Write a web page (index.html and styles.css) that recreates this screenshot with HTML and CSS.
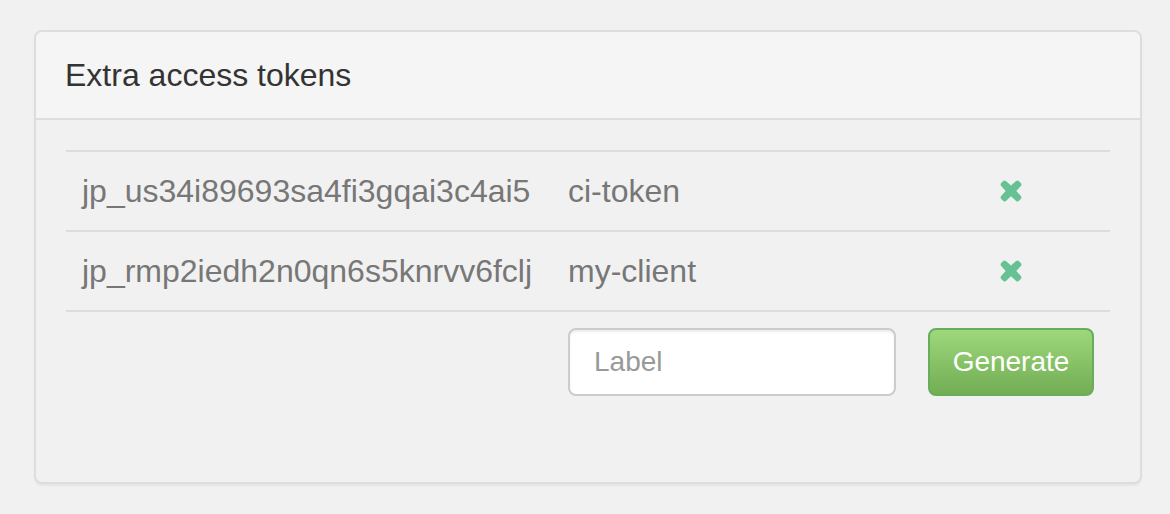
FILE: index.html
```html
<!DOCTYPE html>
<html lang="en">
<head>
<meta charset="utf-8">
<title>Extra access tokens</title>
<link rel="stylesheet" href="styles.css">
</head>
<body>
<form class="panel">
  <h1 class="panel-heading">Extra access tokens</h1>
  <div class="panel-body">
    <table class="tokens">
      <colgroup><col class="col-token"><col class="col-label"><col class="col-action"></colgroup>
      <tbody>
        <tr>
          <td>jp_us34i89693sa4fi3gqai3c4ai5</td>
          <td>ci-token</td>
          <td class="action"><button class="remove" type="button" aria-label="Remove ci-token"><svg class="icon" viewBox="0 0 22 22" aria-hidden="true"><path d="M5.9 1.1 L11 5.6 L16.1 1.1 Q17.6 0 19 1.2 L20.8 3 Q22 4.4 20.9 5.9 L16.3 11 L20.9 16.1 Q22 17.6 20.8 19 L19 20.8 Q17.6 22 16.1 20.9 L11 16.3 L5.9 20.9 Q4.4 22 3 20.8 L1.2 19 Q0 17.6 1.1 16.1 L5.7 11 L1.1 5.9 Q0 4.4 1.2 3 L3 1.2 Q4.4 0 5.9 1.1 Z"/></svg></button></td>
        </tr>
        <tr>
          <td>jp_rmp2iedh2n0qn6s5knrvv6fclj</td>
          <td>my-client</td>
          <td class="action"><button class="remove" type="button" aria-label="Remove my-client"><svg class="icon" viewBox="0 0 22 22" aria-hidden="true"><path d="M5.9 1.1 L11 5.6 L16.1 1.1 Q17.6 0 19 1.2 L20.8 3 Q22 4.4 20.9 5.9 L16.3 11 L20.9 16.1 Q22 17.6 20.8 19 L19 20.8 Q17.6 22 16.1 20.9 L11 16.3 L5.9 20.9 Q4.4 22 3 20.8 L1.2 19 Q0 17.6 1.1 16.1 L5.7 11 L1.1 5.9 Q0 4.4 1.2 3 L3 1.2 Q4.4 0 5.9 1.1 Z"/></svg></button></td>
        </tr>
        <tr>
          <td></td>
          <td><input class="field" type="text" placeholder="Label" aria-label="Label"></td>
          <td class="action"><button class="generate" type="submit">Generate</button></td>
        </tr>
      </tbody>
    </table>
  </div>
</form>
</body>
</html>
```

FILE: styles.css
```css
* { box-sizing: border-box; }
body {
  margin: 0;
  padding: 30px 28px 30px 34px;
  background: #f1f1f1;
  color: #777;
  font: 32px/48px "Liberation Sans", Arial, sans-serif;
}
.panel {
  border: 2px solid #ddd;
  border-radius: 8px;
  box-shadow: 0 2px 2px rgba(0, 0, 0, 0.05);
}
.panel-heading {
  margin: 0;
  padding: 19px 29px;
  border-bottom: 2px solid #ddd;
  border-radius: 6px 6px 0 0;
  background: #f5f5f5;
  color: #333;
  font-size: 32px;
  font-weight: 400;
}
.panel-body { padding: 30px 30px 70px; }
.tokens {
  width: 100%;
  table-layout: fixed;
  border-collapse: separate;
  border-spacing: 0;
}
.col-token { width: 486px; }
.col-action { width: 198px; }
.tokens td {
  height: 80px;
  padding: 0 16px;
  border-top: 2px solid #ddd;
  vertical-align: middle;
}
.tokens tr:last-child td { height: 102px; }
.tokens .action { text-align: center; }
.remove {
  display: flex;
  margin: 0 auto;
  padding: 0;
  border: 0;
  background: none;
  color: #66c295;
}
.icon { width: 22px; height: 22px; fill: currentColor; }
.field, .generate {
  display: block;
  width: 100%;
  height: 68px;
  border-radius: 8px;
  font: 28px/40px "Liberation Sans", Arial, sans-serif;
}
.field {
  padding: 12px 24px;
  border: 2px solid #ccc;
  background: #fff;
  box-shadow: inset 0 2px 2px rgba(0, 0, 0, 0.075);
  color: #555;
}
.field::placeholder { color: #999; opacity: 1; }
.generate {
  padding: 12px 0;
  border: 2px solid #67ad5b;
  background: linear-gradient(#9dd87b, #73ad54);
  color: #fff;
}
```
